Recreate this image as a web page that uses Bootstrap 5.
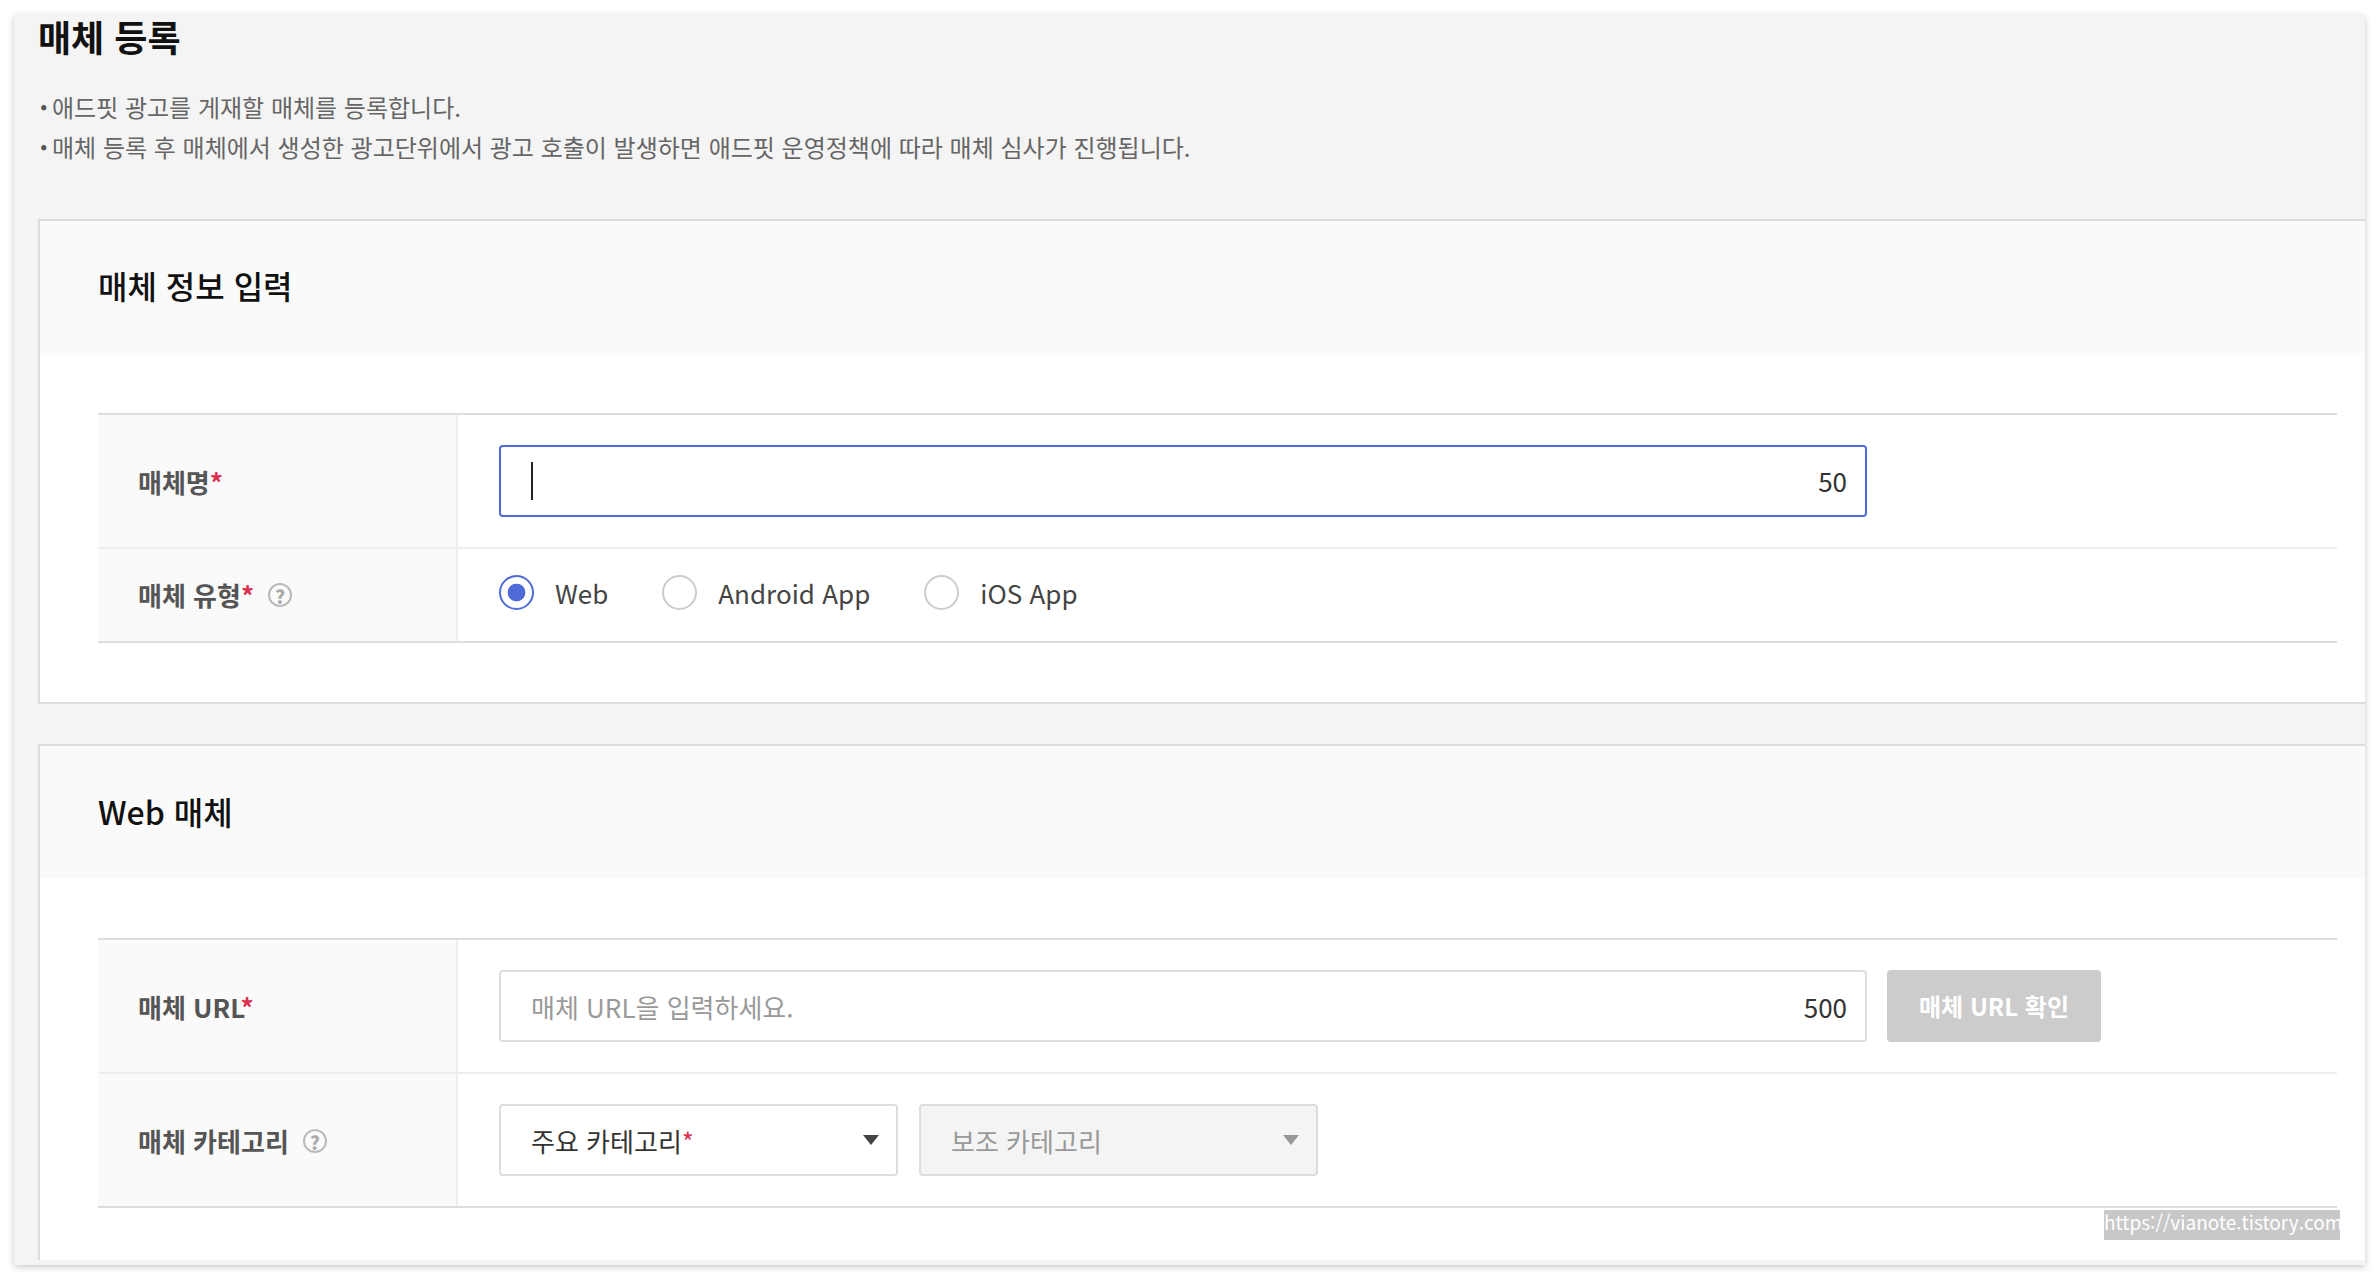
<!doctype html>
<html lang="ko">
<head>
<meta charset="utf-8">
<title>매체 등록</title>
<link href="https://cdn.jsdelivr.net/npm/bootstrap@5.3.0/dist/css/bootstrap.min.css" rel="stylesheet">
<style>
html,body{height:1280px;overflow:hidden;background:#fff}
body{font-family:"Noto Sans CJK KR","Noto Sans",sans-serif;color:#333;padding:15px 15px 0 14px}
.shell{height:1250px;background:#f4f4f4;padding-left:24px;box-shadow:0 2px 7px rgba(0,0,0,.22);border-radius:4px 4px 0 0}
.page-title{font-size:36px;font-weight:700;color:#111;line-height:42px;margin:0;height:42px}
.intro{list-style:none;margin:30px 0 0;padding:0;font-size:24px;line-height:40px;color:#666;height:132px}
.intro li{white-space:nowrap}
.dot-mark{display:inline-block;width:14px;text-align:right;padding-right:4px;font-weight:900;color:#555}
.sheet{background:#fff;border:solid #dcdcdc;border-width:2px 0 2px 2px;margin-bottom:40px}
.sheet-head{height:132px;background:#fafafa;padding:0 58px 4px;display:flex;align-items:center;font-size:32px;font-weight:500;color:#111}
.sheet-body{padding:60px 28px 59px 58px}
.sheet.last{margin-bottom:0;border-bottom:0}
.sheet.last .sheet-head{padding-bottom:2px}
.sheet.last .sheet-body{padding-bottom:52px}
.form-grid{border-top:2px solid #ddd;border-bottom:2px solid #ddd}
.form-line{display:flex}
.form-line+.form-line{border-top:2px solid #eee}
.form-key{flex:0 0 360px;background:#fafafa;border-right:2px solid #eee;padding-left:40px;display:flex;align-items:center;font-size:26px;font-weight:700;color:#555;gap:14px}
.form-val{flex:1;padding:0 0 0 41px;display:flex;align-items:center}
.line-tall{height:132px}
.line-end{height:134px}
.line-short{height:94px}
.line-short .form-key{padding-bottom:2px}
.req{color:#dc2f4f}
.star-wrap{white-space:nowrap}
.hint{width:24px;height:24px;border:2px solid #bbb;border-radius:50%;color:#aaa;font-size:19px;font-weight:900;display:inline-flex;align-items:center;justify-content:center;line-height:1;margin-top:2px}
.field-box{width:1368px;height:72px;border:2px solid #ddd;border-radius:4px;display:flex;align-items:center;padding:0 18px 0 30px;background:#fff;font-size:26px;color:#333}
.field-box.on{border-color:#4f6bd8}
.field-box .form-control{border:0;padding:0;flex:1;background:transparent;box-shadow:none;font-size:26px;color:#333;height:40px}
.field-box .form-control::placeholder{color:#999}
.blink-bar{width:2px;height:38px;background:#222;flex:none}
.count{flex:none;margin-left:12px}
.on .count{margin-bottom:2px}
.check-btn{width:214px;height:72px;margin-left:20px;padding:0;background:#ccc;border:0;color:#fff;font-size:24px;font-weight:700;opacity:1;border-radius:4px}
.btn.check-btn:disabled{background:#ccc;color:#fff;opacity:1}
.radio-row{display:flex;gap:54px;font-size:26px;color:#444;margin-top:-5px}
.radio-item{display:flex;align-items:center;gap:21px;margin:0}
.radio-item .form-check-input{width:35px;height:35px;margin:0;border:2px solid #ccc;background-color:#fff;float:none}
.radio-item .form-check-input:checked{border-color:#4f6bd8;background-color:#fff;background-image:radial-gradient(circle,#4f6bd8 0,#4f6bd8 8.5px,transparent 9.2px)}
.picker{width:399px;height:72px;display:flex;align-items:center;justify-content:space-between;border:2px solid #ddd;border-radius:4px;background:#fff;padding:0 17px 0 30px;font-size:26px;color:#333;text-align:left}
.picker:hover{border-color:#ddd;background:#fff;color:#333}
.picker::after{margin:0;border-top:10px solid #444;border-left:8px solid transparent;border-right:8px solid transparent;border-bottom:0}
.btn.picker:disabled{background:#f4f4f4;color:#999;border-color:#ddd;opacity:1;margin-left:21px}
.btn.picker:disabled::after{border-top-color:#999}
.mark-tag{background:#c8c8c8;color:#fff;font-family:"Noto Sans CJK KR","Noto Sans",sans-serif;font-size:19px;line-height:24px;width:236px;height:30px;position:absolute;left:2104px;top:1210px;text-align:center;white-space:nowrap}
</style>
</head>
<body>
<main class="shell">
  <h1 class="page-title">매체 등록</h1>
  <ul class="intro">
    <li><span class="dot-mark">·</span>애드핏 광고를 게재할 매체를 등록합니다.</li>
    <li><span class="dot-mark">·</span>매체 등록 후 매체에서 생성한 광고단위에서 광고 호출이 발생하면 애드핏 운영정책에 따라 매체 심사가 진행됩니다.</li>
  </ul>
  <section class="sheet">
    <h2 class="sheet-head m-0">매체 정보 입력</h2>
    <div class="sheet-body">
      <div class="form-grid">
        <div class="form-line line-tall">
          <div class="form-key"><span class="star-wrap">매체명<span class="req">*</span></span></div>
          <div class="form-val">
            <div class="field-box on"><span class="blink-bar"></span><input class="form-control" type="text" aria-label="매체명"><span class="count">50</span></div>
          </div>
        </div>
        <div class="form-line line-short">
          <div class="form-key"><span class="star-wrap">매체 유형<span class="req">*</span></span><span class="hint">?</span></div>
          <div class="form-val">
            <div class="radio-row">
              <label class="radio-item"><input class="form-check-input" type="radio" name="kind" checked>Web</label>
              <label class="radio-item"><input class="form-check-input" type="radio" name="kind">Android App</label>
              <label class="radio-item"><input class="form-check-input" type="radio" name="kind">iOS App</label>
            </div>
          </div>
        </div>
      </div>
    </div>
  </section>
  <section class="sheet last">
    <h2 class="sheet-head m-0">Web 매체</h2>
    <div class="sheet-body">
      <div class="form-grid">
        <div class="form-line line-tall">
          <div class="form-key"><span class="star-wrap">매체 URL<span class="req">*</span></span></div>
          <div class="form-val">
            <div class="field-box"><input class="form-control" type="text" placeholder="매체 URL을 입력하세요." aria-label="매체 URL"><span class="count">500</span></div>
            <button class="btn check-btn" type="button" disabled>매체 URL 확인</button>
          </div>
        </div>
        <div class="form-line line-end">
          <div class="form-key">매체 카테고리<span class="hint">?</span></div>
          <div class="form-val">
            <button class="btn picker dropdown-toggle" type="button"><span>주요 카테고리<span class="req">*</span></span></button>
            <button class="btn picker dropdown-toggle" type="button" disabled><span>보조 카테고리</span></button>
          </div>
        </div>
      </div>
    </div>
  </section>
</main>
<div class="mark-tag">https://vianote.tistory.com</div>
<script src="https://cdn.jsdelivr.net/npm/bootstrap@5.3.0/dist/js/bootstrap.bundle.min.js"></script>
</body>
</html>
